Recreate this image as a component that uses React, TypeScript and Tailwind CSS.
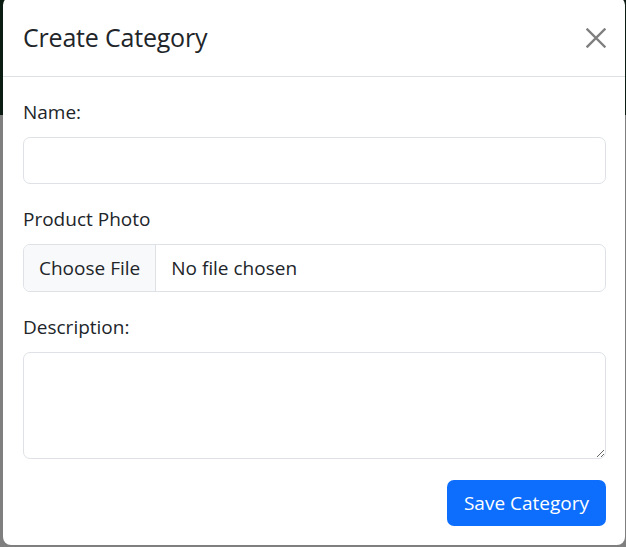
import React from 'react';

const CloseIcon = () => (
  <svg width="20" height="20" viewBox="0 0 20 20" fill="none" stroke="currentColor" strokeWidth={2.4} strokeLinecap="square">
    <path d="M1.5 1.5l17 17M18.5 1.5l-17 17" />
  </svg>
);

export default function App() {
  return (
    <div
      className="relative h-[547px] w-[626px] overflow-hidden bg-[#7f7f7f]"
      style={{ fontFamily: '"Open Sans", "Noto Sans", sans-serif' }}
    >
      <div className="h-[115px] w-full bg-[#0b1d13]" />
      <div className="absolute left-[3px] top-[-3px] flex h-[548px] w-[622px] flex-col rounded-[8px] bg-white text-[#212529]">
        <div className="flex h-[80px] items-center justify-between border-b border-[#dee2e6] pl-[20px] pr-[19px] pt-[2px]">
          <h5 className="text-[25px] font-medium leading-[37px] tracking-[-0.2px]">Create Category</h5>
          <button className="text-[#7f7f7f]">
            <CloseIcon />
          </button>
        </div>

        <div className="flex flex-col pl-[20px] pr-[19px] pt-[20px] text-[19px] leading-[30px]">
          <div className="mb-[20px]">
            <label className="mb-[10px] block">Name:</label>
            <input
              type="text"
              className="block h-[47px] w-full rounded-[7px] border border-[#dee2e6] px-[15px] outline-none"
            />
          </div>

          <div className="mb-[20px]">
            <label className="mb-[10px] block">Product Photo</label>
            <div className="flex h-[48px] w-full overflow-hidden rounded-[7px] border border-[#dee2e6]">
              <div className="flex items-center border-r border-[#dee2e6] bg-[#f8f9fa] px-[15px]">Choose File</div>
              <div className="flex items-center pl-[15px]">No file chosen</div>
            </div>
          </div>

          <div className="mb-[21px]">
            <label className="mb-[10px] block">Description:</label>
            <textarea
              rows={3}
              className="block h-[107px] w-full rounded-[7px] border border-[#dee2e6] px-[15px] py-[8px] outline-none"
            />
          </div>

          <div className="flex justify-end">
            <button className="h-[46px] rounded-[7px] bg-[#0d6efd] px-[17px] text-white">Save Category</button>
          </div>
        </div>
      </div>
    </div>
  );
}
